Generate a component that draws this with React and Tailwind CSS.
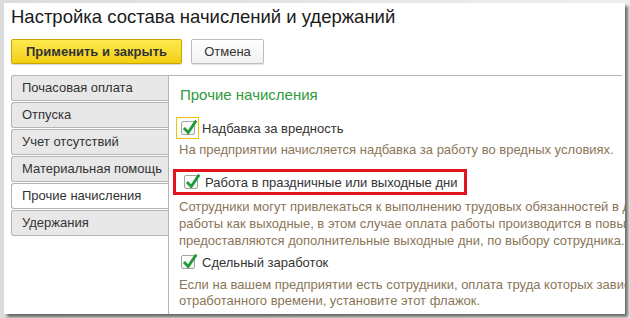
import React from "react";

function Check({ focus }) {
  const box = (
    <div className="relative w-[14px] h-[14px] border border-[#a3a3a3] rounded-[2px] bg-gradient-to-b from-white to-[#f2f2f2]">
      <svg className="absolute left-[-1px] top-[-4px]" width="18" height="18" viewBox="0 0 18 18">
        <polyline points="3,10 7.2,14.6 15.2,2.6" fill="none" stroke="#1f9c3a" strokeWidth="2.8" strokeLinecap="butt" strokeLinejoin="miter" />
      </svg>
    </div>
  );
  if (focus) {
    return (
      <div className="w-[23px] h-[22px] border border-[#f2c200] flex items-center pl-[4px]">
        {box}
      </div>
    );
  }
  return box;
}

const tabs = [
  "Почасовая оплата",
  "Отпуска",
  "Учет отсутствий",
  "Материальная помощь",
  "Прочие начисления",
  "Удержания",
];

export default function App() {
  return (
    <div className="w-[630px] h-[318px] bg-gradient-to-r from-[#dcdcdc] to-[#efefef] pl-[4px] pt-[3px] overflow-hidden font-['Liberation_Sans',Arial,sans-serif]">
      <div className="w-[621px] h-[311px] bg-white shadow-[3px_3px_3px_rgba(0,0,0,0.55)] flex flex-col overflow-hidden">
        <div className="h-[36px] shrink-0 pl-[7px] pt-[3px] text-[18.5px] leading-[22px] text-[#1a1a1a] whitespace-nowrap">
          Настройка состава начислений и удержаний
        </div>
        <div className="flex gap-[9px] pl-[7px] h-[25px] shrink-0">
          <div className="w-[171px] h-[25px] rounded-[2px] border border-[#c8a500] bg-gradient-to-b from-[#fdea4c] to-[#f1cf0a] shadow-[0_1px_1px_rgba(0,0,0,0.15)] flex items-center justify-center text-[13px] font-bold text-[#333]">
            Применить и закрыть
          </div>
          <div className="w-[73px] h-[25px] rounded-[2px] border border-[#bdbdbd] bg-gradient-to-b from-white to-[#f1f1f1] shadow-[0_1px_1px_rgba(0,0,0,0.12)] flex items-center justify-center text-[13px] text-[#333]">
            Отмена
          </div>
        </div>
        <div className="flex flex-1 mt-[11px] min-w-0 min-h-0">
          <div className="w-[164px] shrink-0 pl-[7px] flex flex-col">
            {tabs.map((t, i) => (
              <div
                key={t}
                className={
                  "h-[26px] shrink-0 mb-[1px] border border-r-0 border-[#b5b5b5] rounded-l-[3px] pl-[10px] flex items-center text-[13px] text-[#333] whitespace-nowrap " +
                  (i === 4 ? "bg-white" : "bg-[#e8e8e8]")
                }
              >
                {t}
              </div>
            ))}
          </div>
          <div className="flex-1 min-w-0 mr-[3px] border-l border-t border-[#b5b5b5] flex flex-col text-[13px]">
            <div className="pl-[11px] mt-[10px] text-[15px] leading-[18px] text-[#2f9a3c] shrink-0">Прочие начисления</div>
            <div className="flex items-center h-[22px] mt-[13px] pl-[7px] shrink-0">
              <Check focus />
              <span className="ml-[3px] leading-[15px] text-[#333]">Надбавка за вредность</span>
            </div>
            <div className="pl-[10px] mt-[3px] leading-[16px] text-[#8a7658] whitespace-nowrap shrink-0">
              На предприятии начисляется надбавка за работу во вредных условиях.
            </div>
            <div className="ml-[4px] mt-[11px] w-[294px] h-[26px] border-[3px] border-[#e3141e] flex items-center pl-[8px] shrink-0">
              <Check />
              <span className="ml-[7px] leading-[15px] text-[#333] whitespace-nowrap">Работа в праздничные или выходные дни</span>
            </div>
            <div className="pl-[10px] mt-[3px] leading-[17px] text-[#8a7658] whitespace-nowrap shrink-0">
              <div>Сотрудники могут привлекаться к выполнению трудовых обязанностей в дни, установленные для</div>
              <div>работы как выходные, в этом случае оплата работы производится в повышенном размере или</div>
              <div>предоставляются дополнительные выходные дни, по выбору сотрудника.</div>
            </div>
            <div className="flex items-center h-[22px] mt-[2px] pl-[12px] shrink-0">
              <Check />
              <span className="ml-[7px] leading-[15px] text-[#333]">Сдельный заработок</span>
            </div>
            <div className="pl-[10px] mt-[4px] leading-[16px] text-[#8a7658] whitespace-nowrap shrink-0">
              <div>Если на вашем предприятии есть сотрудники, оплата труда которых зависит от объема работы, а не от</div>
              <div>отработанного времени, установите этот флажок.</div>
            </div>
          </div>
        </div>
      </div>
    </div>
  );
}
